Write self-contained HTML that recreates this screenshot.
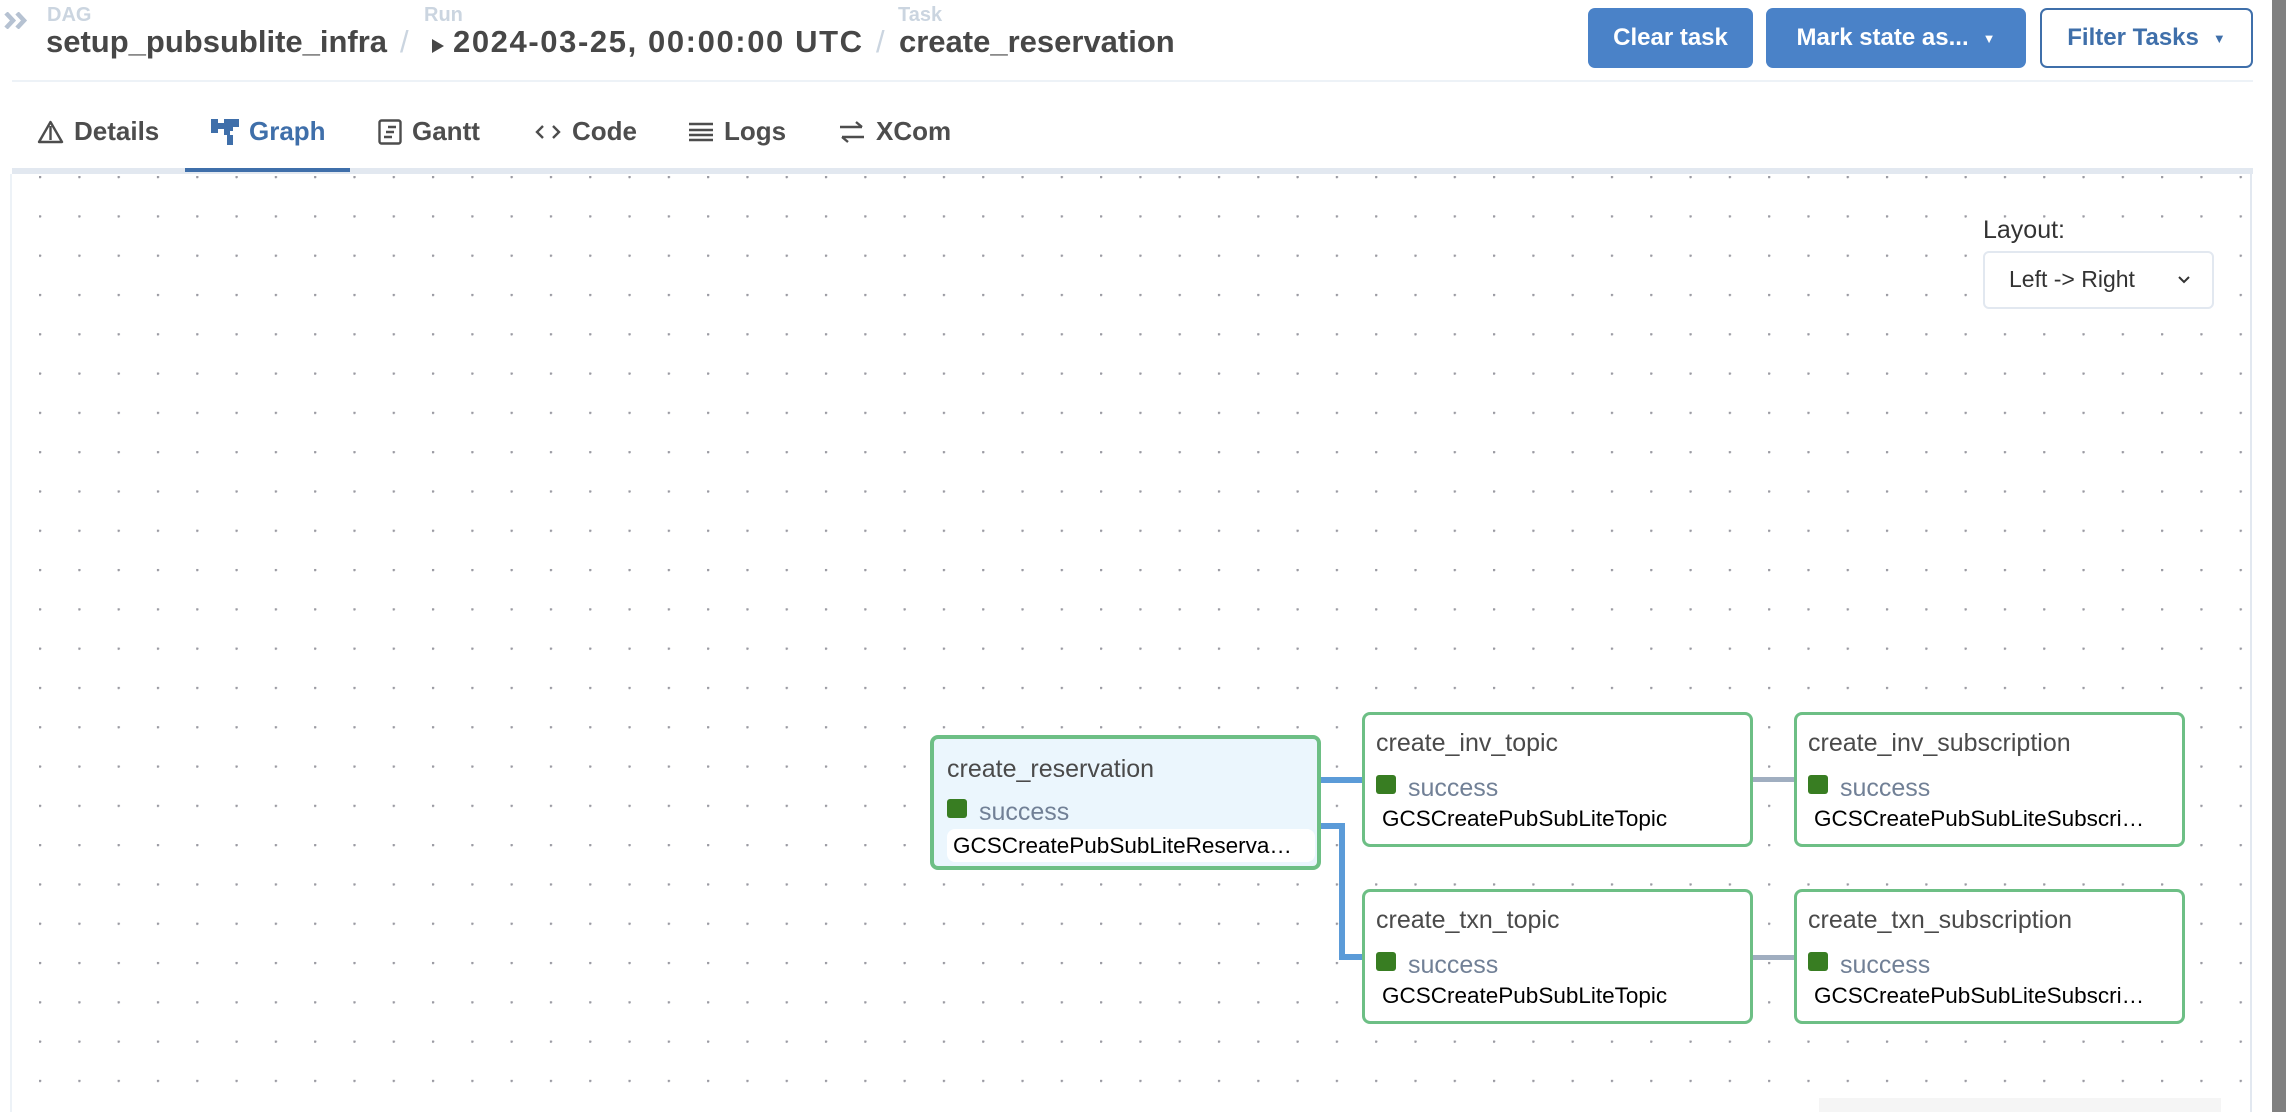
<!DOCTYPE html>
<html><head><meta charset="utf-8"><style>
*{margin:0;padding:0;box-sizing:border-box}
body{width:2286px;height:1112px;overflow:hidden;background:#fff;font-family:"Liberation Sans",Arial,sans-serif;position:relative}
.a{position:absolute;white-space:nowrap}
.lbl{font-size:20px;font-weight:bold;color:#cbd5e0}
.ttl{font-size:31px;font-weight:bold;color:#474747}
.btn{position:absolute;top:8px;height:60px;border-radius:7px;font-size:24px;font-weight:bold;display:flex;align-items:center;justify-content:center}
.tab{position:absolute;top:116px;font-size:26px;font-weight:bold;color:#4d4d4d;display:flex;align-items:center;gap:10px}
.node{position:absolute;width:391px;height:135px;border:3px solid #6dbf85;border-radius:8px;background:#fff}
.node .t{position:absolute;left:11px;top:14px;font-size:25px;color:#4a4a4a}
.node .sq{position:absolute;left:11px;top:60px;width:20px;height:19px;background:#387d22;border-radius:3px}
.node .s{position:absolute;left:43px;top:60px;font-size:25px;color:#718096;line-height:26px}
.node .c{position:absolute;left:17px;top:91px;font-size:22.5px;color:#000}
</style></head><body>
<!-- header -->
<svg class="a" style="left:4px;top:12px" width="26" height="17" viewBox="0 0 26 17"><path d="M2 1l7 7.5-7 7.5M13 1l7 7.5-7 7.5" fill="none" stroke="#b6c2d2" stroke-width="4.5"/></svg>
<div class="a lbl" style="left:47px;top:4px">DAG</div>
<div class="a ttl" style="left:46px;top:24px">setup_pubsublite_infra</div>
<div class="a" style="left:400px;top:24px;font-size:31px;color:#cbd5e0">/</div>
<div class="a lbl" style="left:424px;top:4px">Run</div>
<div class="a" style="left:432px;top:39px;width:0;height:0;border-left:12px solid #474747;border-top:7px solid transparent;border-bottom:7px solid transparent"></div>
<div class="a ttl" style="left:453px;top:24px;letter-spacing:1.6px">2024-03-25, 00:00:00 UTC</div>
<div class="a" style="left:876px;top:24px;font-size:31px;color:#cbd5e0">/</div>
<div class="a lbl" style="left:898px;top:4px">Task</div>
<div class="a ttl" style="left:899px;top:24px">create_reservation</div>

<div class="btn" style="left:1588px;width:165px;background:#4a82c8;color:#fff">Clear task</div>
<div class="btn" style="left:1766px;width:260px;background:#4a82c8;color:#fff">Mark state as...<span style="font-size:13px;margin-left:14px">▼</span></div>
<div class="btn" style="left:2040px;width:213px;background:#fff;color:#3f6faa;border:2px solid #3f6faa">Filter Tasks<span style="font-size:13px;margin-left:14px">▼</span></div>
<div class="a" style="left:12px;top:80px;width:2241px;height:2px;background:#edf2f7"></div>

<!-- tabs -->
<div class="tab" style="left:37px"><svg width="27" height="24" viewBox="0 0 27 24"><path d="M13.5 2L25 22H2Z M13.5 6V20" fill="none" stroke="#4d4d4d" stroke-width="2.4" stroke-linejoin="round"/></svg>Details</div>
<div class="tab" style="left:211px;color:#3f6faa"><svg width="28" height="26" viewBox="0 0 28 26"><path d="M0 0h7v4h6v-4h15v8h-6v4h-3v4h3v10h-6v-10h-3v-6h-6v4h-7z" fill="#3f6faa"/></svg>Graph</div>
<div class="tab" style="left:378px"><svg width="24" height="26" viewBox="0 0 24 26"><rect x="1.5" y="1.5" width="21" height="23" rx="2" fill="none" stroke="#4d4d4d" stroke-width="2.4"/><path d="M10 8h8M8 13h8M6 18h8" stroke="#4d4d4d" stroke-width="2.4"/></svg>Gantt</div>
<div class="tab" style="left:534px"><svg width="28" height="20" viewBox="0 0 28 20"><path d="M9 4L3 10l6 6M19 4l6 6-6 6" fill="none" stroke="#4d4d4d" stroke-width="2.4"/></svg>Code</div>
<div class="tab" style="left:688px"><svg width="26" height="22" viewBox="0 0 26 22"><path d="M1 3h24M1 9h24M1 14h24M1 19h24" stroke="#4d4d4d" stroke-width="2.4"/></svg>Logs</div>
<div class="tab" style="left:838px"><svg width="28" height="26" viewBox="0 0 28 26"><path d="M2 8h22M18 3l6 5M26 18H4M10 23l-6-5" fill="none" stroke="#4d4d4d" stroke-width="2.4"/></svg>XCom</div>

<!-- graph area -->
<div class="a" style="left:12px;top:168px;width:2241px;height:6px;background:#e2e8f0"></div>
<div class="a" style="left:185px;top:168px;width:165px;height:4px;background:#3f6faa"></div>
<div class="a" style="left:12px;top:174px;width:2238px;height:938px;background-image:radial-gradient(circle at 1px 1px,#9a9aa2 1.1px,transparent 1.6px);background-size:39.3px 39.3px;background-position:27px 2px"></div>
<div class="a" style="left:10px;top:174px;width:2px;height:938px;background:#edf2f7"></div>
<div class="a" style="left:2250px;top:174px;width:2px;height:938px;background:#e2e8f0"></div>
<div class="a" style="left:2272px;top:0;width:14px;height:1112px;background:#808080"></div>
<div class="a" style="left:1819px;top:1098px;width:402px;height:14px;background:#f5f5f5"></div>

<div class="a" style="left:1983px;top:216px;font-size:25px;color:#333">Layout:</div>
<div class="a" style="left:1983px;top:251px;width:231px;height:58px;border:2px solid #e2e8f0;border-radius:6px;background:#fff"></div>
<div class="a" style="left:2009px;top:266px;font-size:23px;color:#333">Left -&gt; Right</div>
<svg class="a" style="left:2176px;top:274px" width="16" height="12" viewBox="0 0 16 12"><path d="M3 3l5 5 5-5" fill="none" stroke="#333" stroke-width="2"/></svg>

<!-- edges -->
<div class="a" style="left:1321px;top:777px;width:42px;height:6px;background:#5b9bd8"></div>
<div class="a" style="left:1321px;top:823px;width:24px;height:6px;background:#5b9bd8"></div>
<div class="a" style="left:1339px;top:823px;width:6px;height:137px;background:#5b9bd8"></div>
<div class="a" style="left:1339px;top:954px;width:24px;height:6px;background:#5b9bd8"></div>
<div class="a" style="left:1753px;top:777px;width:42px;height:5px;background:#a0aec0"></div>
<div class="a" style="left:1753px;top:955px;width:42px;height:5px;background:#a0aec0"></div>

<!-- nodes -->
<div class="node" style="left:930px;top:735px;border-width:4px;background:#ebf6fd">
 <div class="t" style="left:13px;top:16px">create_reservation</div>
 <div class="sq" style="left:13px;top:60px"></div>
 <div class="s" style="left:45px;top:60px">success</div>
 <div class="a" style="left:13px;top:90px;width:368px;height:33px;background:#fff;border-radius:8px"></div>
 <div class="c" style="left:19px;top:94px">GCSCreatePubSubLiteReserva…</div>
</div>
<div class="node" style="left:1362px;top:712px"><div class="t">create_inv_topic</div><div class="sq"></div><div class="s">success</div><div class="c">GCSCreatePubSubLiteTopic</div></div>
<div class="node" style="left:1362px;top:889px"><div class="t">create_txn_topic</div><div class="sq"></div><div class="s">success</div><div class="c">GCSCreatePubSubLiteTopic</div></div>
<div class="node" style="left:1794px;top:712px"><div class="t">create_inv_subscription</div><div class="sq"></div><div class="s">success</div><div class="c">GCSCreatePubSubLiteSubscri…</div></div>
<div class="node" style="left:1794px;top:889px"><div class="t">create_txn_subscription</div><div class="sq"></div><div class="s">success</div><div class="c">GCSCreatePubSubLiteSubscri…</div></div>
</body></html>
